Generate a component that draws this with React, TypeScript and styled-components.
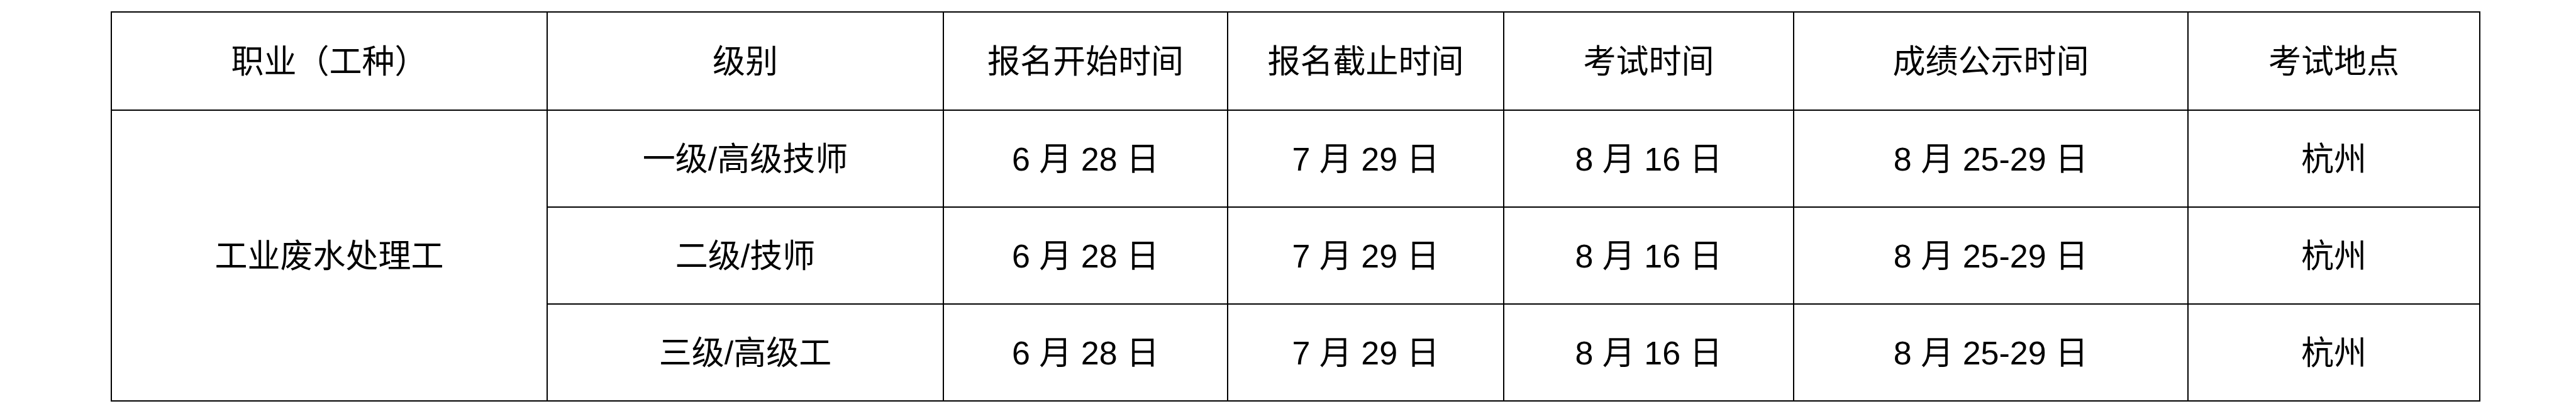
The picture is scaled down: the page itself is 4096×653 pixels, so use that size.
import styled, { createGlobalStyle } from 'styled-components';

const GlobalStyle = createGlobalStyle`
  html, body {
    margin: 0;
    padding: 0;
    background: #ffffff;
  }
`;

const columns = [693, 630, 452, 439, 461, 627, 464];
const headers = ['职业（工种）', '级别', '报名开始时间', '报名截止时间', '考试时间', '成绩公示时间', '考试地点'];

const rows = [
  { level: '一级/高级技师', start: '6 月 28 日', end: '7 月 29 日', exam: '8 月 16 日', result: '8 月 25-29 日', place: '杭州' },
  { level: '二级/技师', start: '6 月 28 日', end: '7 月 29 日', exam: '8 月 16 日', result: '8 月 25-29 日', place: '杭州' },
  { level: '三级/高级工', start: '6 月 28 日', end: '7 月 29 日', exam: '8 月 16 日', result: '8 月 25-29 日', place: '杭州' },
];

function App() {
  return (
    <>
      <GlobalStyle />
      <Page>
        <ScheduleTable>
          <colgroup>
            {columns.map((w, i) => (
              <col key={i} style={{ width: w }} />
            ))}
          </colgroup>
          <thead>
            <HeadRow>
              {headers.map((h) => (
                <Cell as="th" key={h}>{h}</Cell>
              ))}
            </HeadRow>
          </thead>
          <tbody>
            {rows.map((r, i) => (
              <BodyRow key={r.level}>
                {i === 0 && <Cell rowSpan={3}>工业废水处理工</Cell>}
                <Cell>{r.level}</Cell>
                <Cell>{r.start}</Cell>
                <Cell>{r.end}</Cell>
                <Cell>{r.exam}</Cell>
                <Cell>{r.result}</Cell>
                <Cell>{r.place}</Cell>
              </BodyRow>
            ))}
          </tbody>
        </ScheduleTable>
      </Page>
    </>
  );
}

const Page = styled.main`
  padding: 18px 0 0 176px;
`;

const ScheduleTable = styled.table`
  border-collapse: collapse;
  table-layout: fixed;
  width: 3766px;
  border: 2px solid #000;
  font-family: 'Liberation Sans', 'Noto Sans CJK SC', sans-serif;
  font-size: 52px;
  color: #000;
`;

const HeadRow = styled.tr`
  height: 156px;
`;

const BodyRow = styled.tr`
  height: 154px;
`;

const Cell = styled.td`
  border: 2px solid #000;
  padding: 0 0 8px;
  text-align: center;
  vertical-align: middle;
  font-weight: 400;
  white-space: nowrap;
`;

export default App;
